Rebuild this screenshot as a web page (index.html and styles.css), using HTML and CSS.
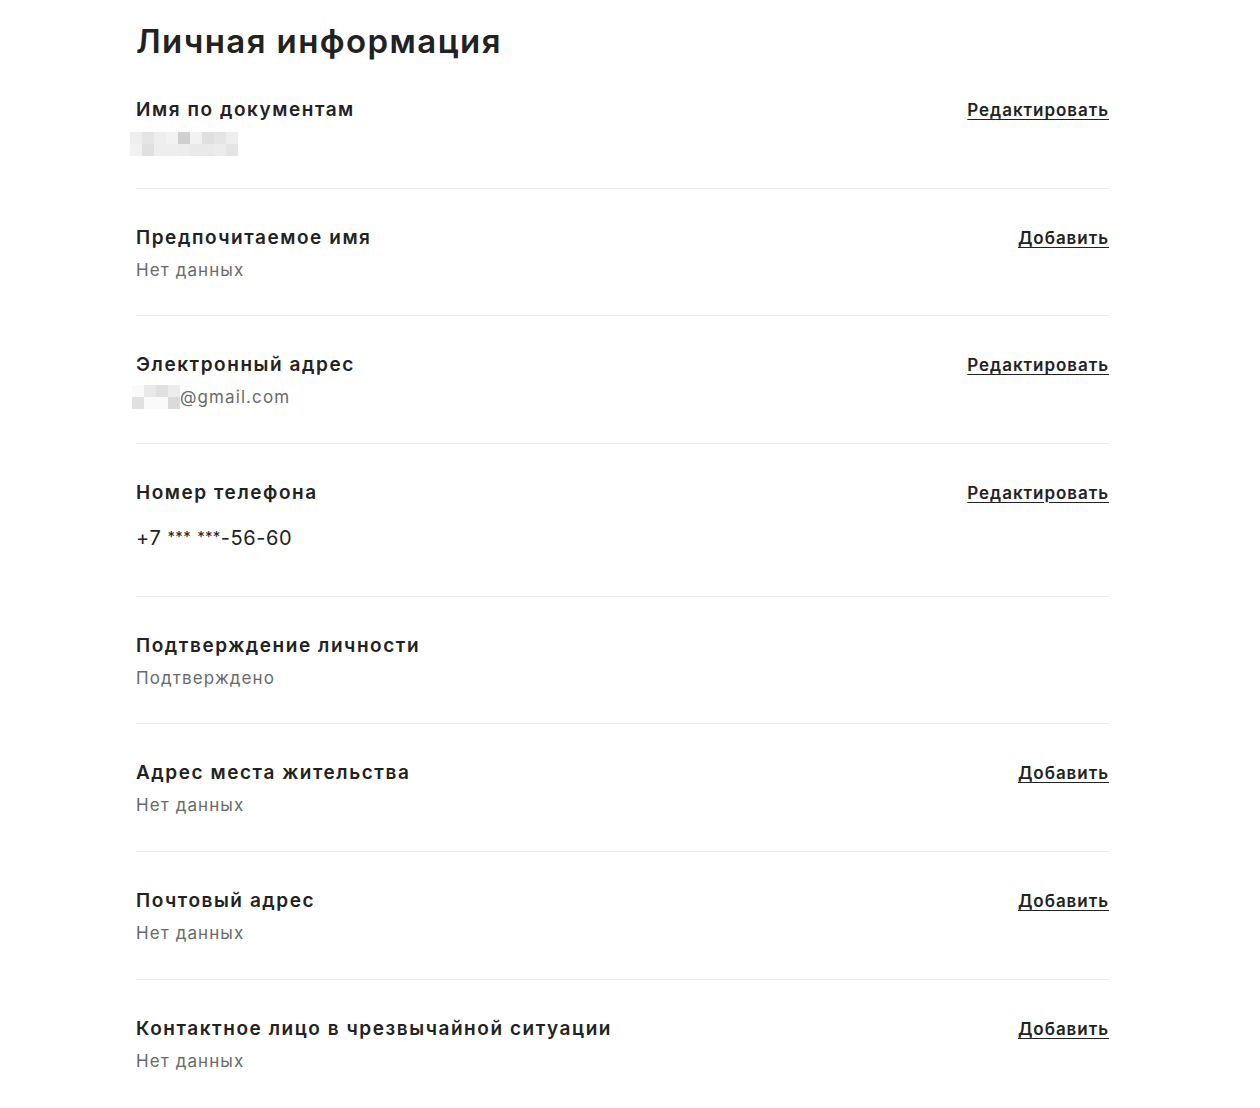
FILE: index.html
```html
<!DOCTYPE html>
<html lang="ru">
<head>
<meta charset="utf-8">
<title>Личная информация</title>
<link rel="stylesheet" href="styles.css">
</head>
<body>
<main class="page">
  <h1 class="page-title">Личная информация</h1>

  <section class="row">
    <div class="row-text">
      <div class="row-label">Имя по документам</div>
      <div class="row-value">
        <span class="pix pix-name">
          <i class="c1"></i><i class="c4"></i><i class="c1"></i><i class="c0"></i><i class="c6"></i><i class="c0"></i><i class="c5"></i><i class="c4"></i><i class="c1"></i>
          <i class="c0"></i><i class="c5"></i><i class="c1"></i><i class="c1"></i><i class="c2"></i><i class="c3"></i><i class="c3"></i><i class="c2"></i><i class="c4"></i>
        </span>
      </div>
    </div>
    <a class="row-link" href="#">Редактировать</a>
  </section>

  <section class="row">
    <div class="row-text">
      <div class="row-label">Предпочитаемое имя</div>
      <div class="row-value">Нет данных</div>
    </div>
    <a class="row-link" href="#">Добавить</a>
  </section>

  <section class="row">
    <div class="row-text">
      <div class="row-label">Электронный адрес</div>
      <div class="row-value email"><span class="pix pix-mail"><i class="w"></i><i class="c3"></i><i class="c5"></i><i class="c2"></i><i class="c5"></i><i class="w"></i><i class="w"></i><i class="c7"></i></span>@gmail.com</div>
    </div>
    <a class="row-link" href="#">Редактировать</a>
  </section>

  <section class="row row-phone">
    <div class="row-text">
      <div class="row-label">Номер телефона</div>
      <div class="row-value phone">+7 <span class="stars">***</span> <span class="stars">***</span>-56-60</div>
    </div>
    <a class="row-link" href="#">Редактировать</a>
  </section>

  <section class="row">
    <div class="row-text">
      <div class="row-label">Подтверждение личности</div>
      <div class="row-value">Подтверждено</div>
    </div>
  </section>

  <section class="row">
    <div class="row-text">
      <div class="row-label">Адрес места жительства</div>
      <div class="row-value">Нет данных</div>
    </div>
    <a class="row-link" href="#">Добавить</a>
  </section>

  <section class="row">
    <div class="row-text">
      <div class="row-label">Почтовый адрес</div>
      <div class="row-value">Нет данных</div>
    </div>
    <a class="row-link" href="#">Добавить</a>
  </section>

  <section class="row row-last">
    <div class="row-text">
      <div class="row-label">Контактное лицо в чрезвычайной ситуации</div>
      <div class="row-value">Нет данных</div>
    </div>
    <a class="row-link" href="#">Добавить</a>
  </section>
</main>
</body>
</html>
```

FILE: styles.css
```css
html, body {
  margin: 0;
  padding: 0;
  background: #ffffff;
}

body {
  font-family: Inter, "Noto Sans", "Liberation Sans", sans-serif;
  color: #222222;
  -webkit-font-smoothing: antialiased;
}

.page {
  width: 973px;
  margin-left: 136px;
}

.page-title {
  margin: 0;
  padding-top: 23px;
  height: 38px;
  font-size: 33px;
  line-height: 36px;
  font-weight: 600;
  letter-spacing: 1.4px;
  color: #222222;
}

.row {
  display: flex;
  justify-content: space-between;
  align-items: flex-start;
  padding: 37px 0 33.6px;
  border-bottom: 1px solid #ebebeb;
}

.row-last {
  border-bottom: none;
}

.row-phone {
  padding-bottom: 46px;
}

.row-label {
  font-size: 19px;
  line-height: 24px;
  font-weight: 600;
  letter-spacing: 1.55px;
  color: #222222;
}

.row-value {
  margin-top: 8px;
  height: 24px;
  font-size: 17px;
  line-height: 24px;
  letter-spacing: 1.1px;
  color: #6a6a6a;
  display: flex;
  align-items: center;
}

.row-value.phone {
  margin-top: 20px;
  height: auto;
  font-size: 20px;
  letter-spacing: 0.6px;
  color: #222222;
  display: block;
}

.stars {
  font-size: 15px;
  letter-spacing: 0.3px;
  vertical-align: 3px;
}

.row-link {
  font-size: 17px;
  line-height: 24px;
  font-weight: 600;
  letter-spacing: 0.95px;
  color: #222222;
  text-decoration: underline;
  text-underline-offset: 3px;
}

.pix {
  display: grid;
  grid-auto-rows: 12px;
}

.pix i {
  display: block;
}

.pix-name {
  grid-template-columns: repeat(9, 12px);
  margin-left: -6px;
  margin-top: 3px;
}

.pix-mail {
  grid-template-columns: repeat(4, 12px);
  margin-left: -4px;
}

.w  { background: #fafafa; }
.c0 { background: #f2f2f2; }
.c1 { background: #eeeeee; }
.c2 { background: #ececec; }
.c3 { background: #e9e9e9; }
.c4 { background: #e5e5e5; }
.c5 { background: #e0e0e0; }
.c6 { background: #cfcfcf; }
.c7 { background: #dadada; }
```
